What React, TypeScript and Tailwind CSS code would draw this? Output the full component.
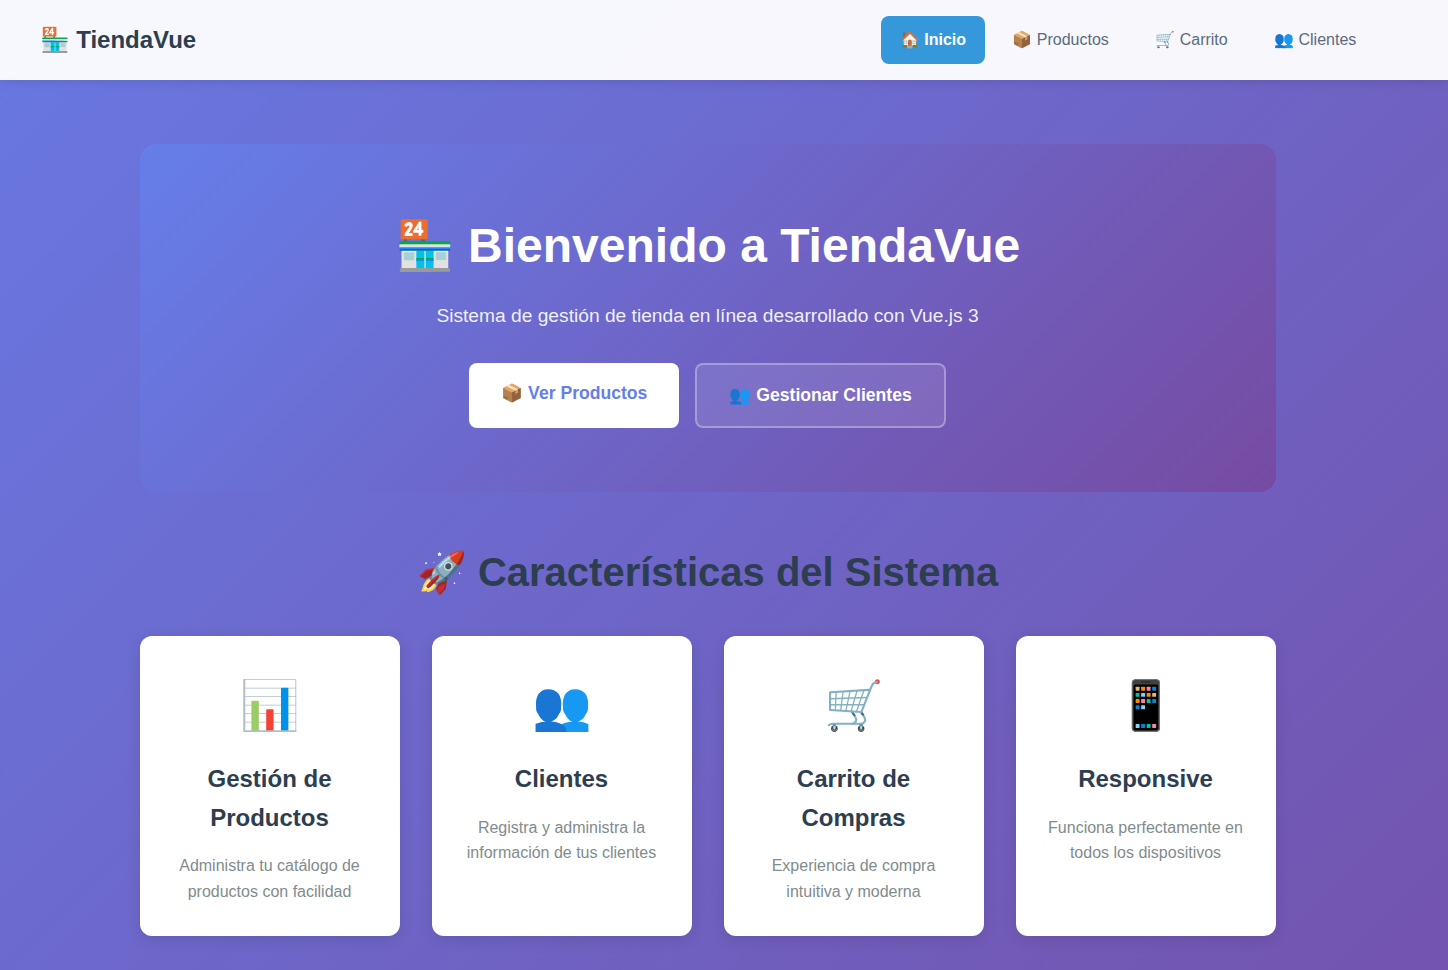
const features = [
  {
    icon: "📊",
    title: "Gestión de Productos",
    text: "Administra tu catálogo de productos con facilidad",
  },
  {
    icon: "👥",
    title: "Clientes",
    text: "Registra y administra la información de tus clientes",
  },
  {
    icon: "🛒",
    title: "Carrito de Compras",
    text: "Experiencia de compra intuitiva y moderna",
  },
  {
    icon: "📱",
    title: "Responsive",
    text: "Funciona perfectamente en todos los dispositivos",
  },
]

const links = [
  { label: "🏠 Inicio", active: true },
  { label: "📦 Productos", active: false },
  { label: "🛒 Carrito", active: false },
  { label: "👥 Clientes", active: false },
]

function Navbar() {
  return (
    <nav className="h-20 bg-white/95 shadow-[0_2px_10px_rgba(0,0,0,0.1)]">
      <div className="flex h-full w-[1415px] items-center justify-between px-[39.5px]">
        <div className="text-2xl font-bold text-[#2c3e50]">🏪 TiendaVue</div>
        <ul className="flex items-center gap-2">
          {links.map((link) => (
            <li key={link.label}>
              <a
                className={
                  link.active
                    ? "block rounded-lg bg-[#3498db] px-[19.2px] py-3 font-semibold text-white"
                    : "block rounded-lg px-[19.2px] py-3 font-normal text-[#5a6c7d]"
                }
              >
                {link.label}
              </a>
            </li>
          ))}
        </ul>
      </div>
    </nav>
  )
}

function Hero() {
  return (
    <section className="rounded-2xl bg-[linear-gradient(135deg,#667eea_0%,#764ba2_100%)] px-8 py-16 text-center text-white">
      <h1 className="mb-4 text-5xl/[1.6] font-bold">🏪 Bienvenido a TiendaVue</h1>
      <p className="mb-[31.9px] text-[19.2px]/[1.6] opacity-90">
        Sistema de gestión de tienda en línea desarrollado con Vue.js 3
      </p>
      <div className="flex justify-center gap-4">
        <a className="block rounded-lg bg-white px-8 py-4 text-[17.6px]/[1.6] font-semibold text-[#667eea]">
          📦 Ver Productos
        </a>
        <a className="block rounded-lg border-2 border-white/30 bg-white/10 px-8 py-4 text-[17.6px]/[1.6] font-semibold text-white">
          👥 Gestionar Clientes
        </a>
      </div>
    </section>
  )
}

function FeatureCard({ icon, title, text }: { icon: string; title: string; text: string }) {
  return (
    <div className="rounded-xl bg-white p-8 text-center shadow-[0_4px_15px_rgba(0,0,0,0.1)]">
      <div className="mb-4 text-5xl/[1.6]">{icon}</div>
      <h3 className="mb-4 text-2xl/[1.6] font-semibold text-[#2c3e50]">{title}</h3>
      <p className="text-base/[1.6] text-[#7f8c8d]">{text}</p>
    </div>
  )
}

export default function App() {
  return (
    <div className="min-h-[970px] bg-[linear-gradient(135deg,#6878e2_0%,#764ba2_100%)] bg-[length:100%_1552px] font-['Liberation_Sans',sans-serif]">
      <Navbar />
      <div className="w-[1415px]">
        <main className="mx-auto max-w-[1200px] px-8 py-16">
          <Hero />
          <section className="mt-12">
            <h2 className="mb-8 text-center text-[40px]/[1.6] font-bold text-[#2c3e50]">
              🚀 Características del Sistema
            </h2>
            <div className="grid grid-cols-4 gap-8">
              {features.map((feature) => (
                <FeatureCard key={feature.title} {...feature} />
              ))}
            </div>
          </section>
        </main>
      </div>
    </div>
  )
}
